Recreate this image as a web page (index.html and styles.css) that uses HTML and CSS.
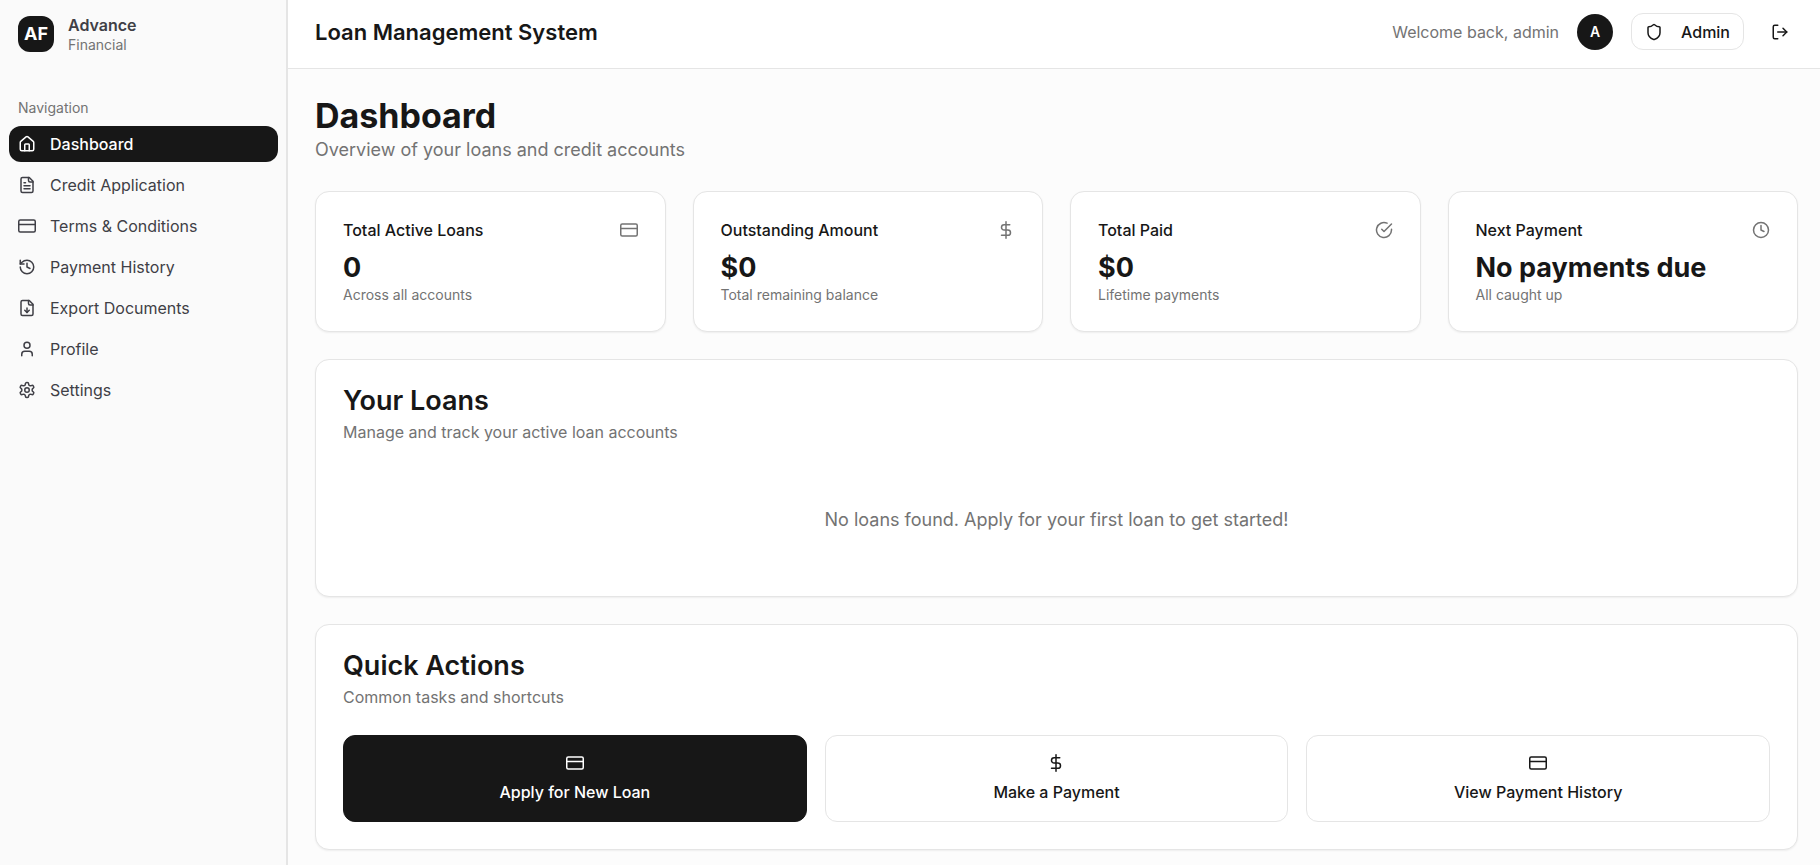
FILE: index.html
```html
<!DOCTYPE html>
<html lang="en">
<head>
<meta charset="utf-8">
<meta name="viewport" content="width=device-width, initial-scale=1">
<title>Loan Management System</title>
<link rel="stylesheet" href="styles.css">
</head>
<body>
<svg class="sprite" aria-hidden="true">
  <symbol id="house" viewBox="0 0 24 24"><path d="M15 21v-8a1 1 0 0 0-1-1h-4a1 1 0 0 0-1 1v8"/><path d="M3 10a2 2 0 0 1 .709-1.528l7-5.999a2 2 0 0 1 2.582 0l7 5.999A2 2 0 0 1 21 10v9a2 2 0 0 1-2 2H5a2 2 0 0 1-2-2z"/></symbol>
  <symbol id="file-text" viewBox="0 0 24 24"><path d="M15 2H6a2 2 0 0 0-2 2v16a2 2 0 0 0 2 2h12a2 2 0 0 0 2-2V7Z"/><path d="M14 2v4a2 2 0 0 0 2 2h4"/><path d="M10 9H8"/><path d="M16 13H8"/><path d="M16 17H8"/></symbol>
  <symbol id="card" viewBox="0 0 24 24"><rect width="22" height="16" x="1" y="4" rx="2"/><path d="M1 10h22"/></symbol>
  <symbol id="history" viewBox="0 0 24 24"><path d="M3 12a9 9 0 1 0 9-9 9.75 9.75 0 0 0-6.74 2.74L3 8"/><path d="M3 3v5h5"/><path d="M12 7v5l4 2"/></symbol>
  <symbol id="file-down" viewBox="0 0 24 24"><path d="M15 2H6a2 2 0 0 0-2 2v16a2 2 0 0 0 2 2h12a2 2 0 0 0 2-2V7Z"/><path d="M14 2v4a2 2 0 0 0 2 2h4"/><path d="M12 18v-6"/><path d="m9 15 3 3 3-3"/></symbol>
  <symbol id="user" viewBox="0 0 24 24"><path d="M19 21v-2a4 4 0 0 0-4-4H9a4 4 0 0 0-4 4v2"/><circle cx="12" cy="7" r="4"/></symbol>
  <symbol id="settings" viewBox="0 0 24 24"><path d="M12.22 2h-.44a2 2 0 0 0-2 2v.18a2 2 0 0 1-1 1.73l-.43.25a2 2 0 0 1-2 0l-.15-.08a2 2 0 0 0-2.73.73l-.22.38a2 2 0 0 0 .73 2.73l.15.1a2 2 0 0 1 1 1.72v.51a2 2 0 0 1-1 1.74l-.15.09a2 2 0 0 0-.73 2.73l.22.38a2 2 0 0 0 2.73.73l.15-.08a2 2 0 0 1 2 0l.43.25a2 2 0 0 1 1 1.73V20a2 2 0 0 0 2 2h.44a2 2 0 0 0 2-2v-.18a2 2 0 0 1 1-1.73l.43-.25a2 2 0 0 1 2 0l.15.08a2 2 0 0 0 2.73-.73l.22-.39a2 2 0 0 0-.73-2.73l-.15-.08a2 2 0 0 1-1-1.74v-.5a2 2 0 0 1 1-1.74l.15-.09a2 2 0 0 0 .73-2.73l-.22-.38a2 2 0 0 0-2.73-.73l-.15.08a2 2 0 0 1-2 0l-.43-.25a2 2 0 0 1-1-1.73V4a2 2 0 0 0-2-2z"/><circle cx="12" cy="12" r="3"/></symbol>
  <symbol id="shield" viewBox="0 0 24 24"><path d="M20 13c0 5-3.5 7.5-7.66 8.95a1 1 0 0 1-.67-.01C7.5 20.5 4 18 4 13V6a1 1 0 0 1 1-1c2 0 4.5-1.2 6.24-2.72a1.17 1.17 0 0 1 1.52 0C14.51 3.81 17 5 19 5a1 1 0 0 1 1 1z"/></symbol>
  <symbol id="log-out" viewBox="0 0 24 24"><path d="M9 21H5a2 2 0 0 1-2-2V5a2 2 0 0 1 2-2h4"/><path d="m16 17 5-5-5-5"/><path d="M21 12H9"/></symbol>
  <symbol id="dollar" viewBox="0 0 24 24"><path d="M12 1v22"/><path d="M17 5H9.500a3.500 3.500 0 0 0 0 7h5a3.500 3.500 0 0 1 0 7H6"/></symbol>
  <symbol id="check" viewBox="0 0 24 24"><path d="M22 11.080V12a10 10 0 1 1-5.930-9.140"/><path d="m9 11 3 3L22 4"/></symbol>
  <symbol id="clock" viewBox="0 0 24 24"><circle cx="12" cy="12" r="10"/><path d="M12 6v6l4 2"/></symbol>
</svg>
<div class="app">
  <aside class="sidebar">
    <div class="brand">
      <div class="brand-mark">AF</div>
      <div>
        <div class="brand-name">Advance</div>
        <div class="brand-sub">Financial</div>
      </div>
    </div>
    <nav class="nav" aria-labelledby="nav-label">
      <div class="nav-label" id="nav-label">Navigation</div>
      <ul class="nav-list">
        <li><a class="nav-item active" href="#" aria-current="page"><svg class="icon"><use href="#house"/></svg>Dashboard</a></li>
        <li><a class="nav-item" href="#"><svg class="icon"><use href="#file-text"/></svg>Credit Application</a></li>
        <li><a class="nav-item" href="#"><svg class="icon"><use href="#card"/></svg>Terms &amp; Conditions</a></li>
        <li><a class="nav-item" href="#"><svg class="icon"><use href="#history"/></svg>Payment History</a></li>
        <li><a class="nav-item" href="#"><svg class="icon"><use href="#file-down"/></svg>Export Documents</a></li>
        <li><a class="nav-item" href="#"><svg class="icon"><use href="#user"/></svg>Profile</a></li>
        <li><a class="nav-item" href="#"><svg class="icon"><use href="#settings"/></svg>Settings</a></li>
      </ul>
    </nav>
  </aside>
  <div class="page">
    <header class="topbar">
      <div class="app-title">Loan Management System</div>
      <div class="account">
        <span class="welcome">Welcome back, admin</span>
        <span class="avatar">A</span>
        <button class="admin-btn" type="button"><svg class="icon"><use href="#shield"/></svg>Admin</button>
        <button class="icon-btn" type="button" aria-label="Log out"><svg class="icon"><use href="#log-out"/></svg></button>
      </div>
    </header>
    <main class="main">
      <div>
        <h1 class="page-title">Dashboard</h1>
        <p class="page-sub">Overview of your loans and credit accounts</p>
      </div>
      <section class="stats">
        <article class="card">
          <div class="stat-head"><h2 class="stat-title">Total Active Loans</h2><svg class="icon"><use href="#card"/></svg></div>
          <div class="stat-value">0</div>
          <p class="stat-note">Across all accounts</p>
        </article>
        <article class="card">
          <div class="stat-head"><h2 class="stat-title">Outstanding Amount</h2><svg class="icon"><use href="#dollar"/></svg></div>
          <div class="stat-value">$0</div>
          <p class="stat-note">Total remaining balance</p>
        </article>
        <article class="card">
          <div class="stat-head"><h2 class="stat-title">Total Paid</h2><svg class="icon"><use href="#check"/></svg></div>
          <div class="stat-value">$0</div>
          <p class="stat-note">Lifetime payments</p>
        </article>
        <article class="card">
          <div class="stat-head"><h2 class="stat-title">Next Payment</h2><svg class="icon"><use href="#clock"/></svg></div>
          <div class="stat-value">No payments due</div>
          <p class="stat-note">All caught up</p>
        </article>
      </section>
      <section class="card">
        <h2 class="card-title">Your Loans</h2>
        <p class="card-sub">Manage and track your active loan accounts</p>
        <p class="empty">No loans found. Apply for your first loan to get started!</p>
      </section>
      <section class="card">
        <h2 class="card-title">Quick Actions</h2>
        <p class="card-sub">Common tasks and shortcuts</p>
        <div class="actions">
          <button class="action primary" type="button"><svg class="icon"><use href="#card"/></svg>Apply for New Loan</button>
          <button class="action" type="button"><svg class="icon"><use href="#dollar"/></svg>Make a Payment</button>
          <button class="action" type="button"><svg class="icon"><use href="#card"/></svg>View Payment History</button>
        </div>
      </section>
    </main>
  </div>
</div>
</body>
</html>
```

FILE: styles.css
```css
* { box-sizing: border-box; }
body, h1, h2, p, ul { margin: 0; padding: 0; }
body {
  font-family: Inter, "Liberation Sans", sans-serif;
  font-size: 16px;
  line-height: 22px;
  color: #171717;
  background: #fcfcfc;
}
button { font: inherit; color: inherit; cursor: pointer; }
.sprite { display: none; }
.icon {
  width: 18px;
  height: 18px;
  flex: none;
  fill: none;
  stroke: currentColor;
  stroke-width: 2;
  stroke-linecap: round;
  stroke-linejoin: round;
}

.app { display: flex; min-height: 100vh; }
.sidebar {
  width: 288px;
  flex: none;
  background: #fafafa;
  border-right: 2px solid #e5e5e5;
}
.brand { display: flex; align-items: center; gap: 14px; padding: 14px 18px; }
.brand-mark {
  display: grid;
  place-items: center;
  width: 36px;
  height: 36px;
  border-radius: 12px;
  background: #171717;
  color: #fff;
  font-size: 18px;
  font-weight: 700;
}
.brand-name { font-weight: 600; color: #3f3f46; line-height: 22px; }
.brand-sub { font-size: 14px; line-height: 18px; color: #737373; }
.nav { padding: 22px 8px 0 9px; }
.nav-label { padding: 0 9px; font-size: 14px; line-height: 36px; color: #737373; }
.nav-list { display: flex; flex-direction: column; gap: 5px; list-style: none; }
.nav-item {
  display: flex;
  align-items: center;
  gap: 14px;
  height: 36px;
  padding: 0 9px;
  border-radius: 12px;
  color: #3f3f46;
  text-decoration: none;
}
.nav-item.active { background: #171717; color: #fff; font-weight: 500; }

.page { flex: 1; min-width: 0; }
.topbar {
  display: flex;
  align-items: center;
  justify-content: space-between;
  padding: 13px 22px 18px 27px;
  background: #fff;
  border-bottom: 1px solid #e5e5e5;
}
.app-title { font-size: 22px; font-weight: 600; line-height: 32px; }
.account { display: flex; align-items: center; gap: 18px; }
.welcome { color: #737373; }
.avatar {
  display: grid;
  place-items: center;
  width: 36px;
  height: 36px;
  border-radius: 50%;
  background: #171717;
  color: #fff;
  font-size: 14px;
  font-weight: 600;
}
.admin-btn {
  display: flex;
  align-items: center;
  gap: 18px;
  height: 37px;
  padding: 0 13px;
  border: 1px solid #e5e5e5;
  border-radius: 12px;
  background: #fff;
  font-weight: 500;
}
.icon-btn {
  display: grid;
  place-items: center;
  width: 36px;
  height: 36px;
  padding: 0;
  border: 0;
  background: none;
}

.main {
  display: flex;
  flex-direction: column;
  gap: 27px;
  padding: 27px 22px 14px 27px;
}
.page-title { font-size: 34px; font-weight: 700; line-height: 40px; }
.page-sub { font-size: 18px; line-height: 28px; color: #737373; }
.stats { display: grid; grid-template-columns: repeat(4, 1fr); gap: 27px; }
.card {
  padding: 27px;
  border: 1px solid #e5e5e5;
  border-radius: 14px;
  background: #fff;
  box-shadow: 0 1px 2px rgba(0, 0, 0, 0.06);
}
.stat-head {
  display: flex;
  align-items: center;
  justify-content: space-between;
  margin-bottom: 9px;
  color: #737373;
}
.stat-title { font-size: 16px; font-weight: 500; line-height: 22px; color: #171717; }
.stat-value { font-size: 27px; font-weight: 700; line-height: 36px; }
.stat-note { font-size: 14px; line-height: 18px; color: #737373; }
.card-title { font-size: 27px; font-weight: 600; line-height: 27px; }
.card-sub { margin-top: 7px; color: #737373; }
.empty {
  padding: 63px 0 36px;
  font-size: 18px;
  line-height: 27px;
  text-align: center;
  color: #737373;
}
.actions { display: grid; grid-template-columns: repeat(3, 1fr); gap: 18px; margin-top: 27px; }
.action {
  display: flex;
  flex-direction: column;
  align-items: center;
  gap: 9px;
  padding: 18px;
  border: 1px solid #e5e5e5;
  border-radius: 12px;
  background: #fff;
  font-weight: 500;
}
.action.primary { background: #171717; border-color: #171717; color: #fff; }
```
